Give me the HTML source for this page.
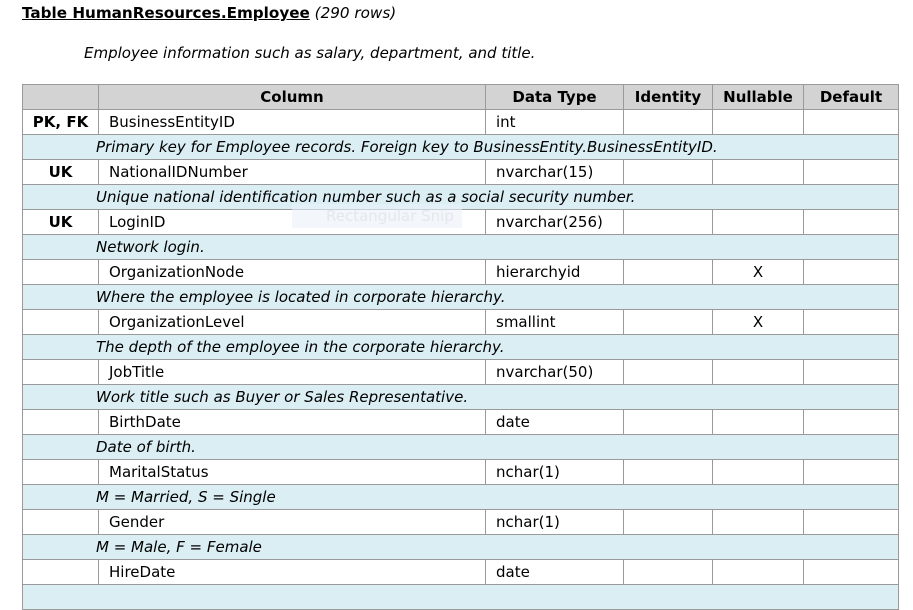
<!DOCTYPE html>
<html><head><meta charset="utf-8"><style>
body{margin:0;background:#fff;font-family:"DejaVu Sans",Verdana,sans-serif;font-size:15px;color:#000;width:913px;height:590px;overflow:hidden;position:relative}
.t{position:absolute;left:22px;top:4px;font-size:15.2px}
.t b{text-decoration:underline}
.d{position:absolute;left:84px;top:44px;font-style:italic;font-size:15px}
table{position:absolute;left:22px;top:84px;border-collapse:collapse;table-layout:fixed;width:876px}
td,th{border:1px solid #9a9a9a;height:24px;line-height:22px;padding:0 10px;white-space:nowrap;overflow:hidden;font-size:15px}
th{background:#d3d3d3;font-weight:bold;text-align:center}
td.k{font-weight:bold;text-align:center;padding:0}
tr.c td{background:#daeef3;font-style:italic;padding-left:73px}
td.x{text-align:center}
.snip{position:absolute;left:292px;top:204px;width:170px;height:24px;background:rgba(235,242,250,.6);color:#e4e8ec;font-size:15px;line-height:24px;padding-left:34px;box-sizing:border-box}
</style></head><body>
<div class="t"><b>Table HumanResources.Employee</b> <i>(290 rows)</i></div>
<div class="d">Employee information such as salary, department, and title.</div>
<table>
<colgroup><col style="width:76px"><col style="width:387px"><col style="width:138px"><col style="width:89px"><col style="width:91px"><col style="width:95px"></colgroup>
<tr><th></th><th>Column</th><th>Data Type</th><th>Identity</th><th>Nullable</th><th>Default</th></tr>
<tr><td class="k">PK, FK</td><td>BusinessEntityID</td><td>int</td><td></td><td></td><td></td></tr>
<tr class="c"><td colspan="6">Primary key for Employee records. Foreign key to BusinessEntity.BusinessEntityID.</td></tr>
<tr><td class="k">UK</td><td>NationalIDNumber</td><td>nvarchar(15)</td><td></td><td></td><td></td></tr>
<tr class="c"><td colspan="6">Unique national identification number such as a social security number.</td></tr>
<tr><td class="k">UK</td><td>LoginID</td><td>nvarchar(256)</td><td></td><td></td><td></td></tr>
<tr class="c"><td colspan="6">Network login.</td></tr>
<tr><td></td><td>OrganizationNode</td><td>hierarchyid</td><td></td><td class="x">X</td><td></td></tr>
<tr class="c"><td colspan="6">Where the employee is located in corporate hierarchy.</td></tr>
<tr><td></td><td>OrganizationLevel</td><td>smallint</td><td></td><td class="x">X</td><td></td></tr>
<tr class="c"><td colspan="6">The depth of the employee in the corporate hierarchy.</td></tr>
<tr><td></td><td>JobTitle</td><td>nvarchar(50)</td><td></td><td></td><td></td></tr>
<tr class="c"><td colspan="6">Work title such as Buyer or Sales Representative.</td></tr>
<tr><td></td><td>BirthDate</td><td>date</td><td></td><td></td><td></td></tr>
<tr class="c"><td colspan="6">Date of birth.</td></tr>
<tr><td></td><td>MaritalStatus</td><td>nchar(1)</td><td></td><td></td><td></td></tr>
<tr class="c"><td colspan="6">M = Married, S = Single</td></tr>
<tr><td></td><td>Gender</td><td>nchar(1)</td><td></td><td></td><td></td></tr>
<tr class="c"><td colspan="6">M = Male, F = Female</td></tr>
<tr><td></td><td>HireDate</td><td>date</td><td></td><td></td><td></td></tr>
<tr class="c"><td colspan="6">&nbsp;</td></tr>
</table>
<div class="snip">Rectangular Snip</div>
</body></html>
